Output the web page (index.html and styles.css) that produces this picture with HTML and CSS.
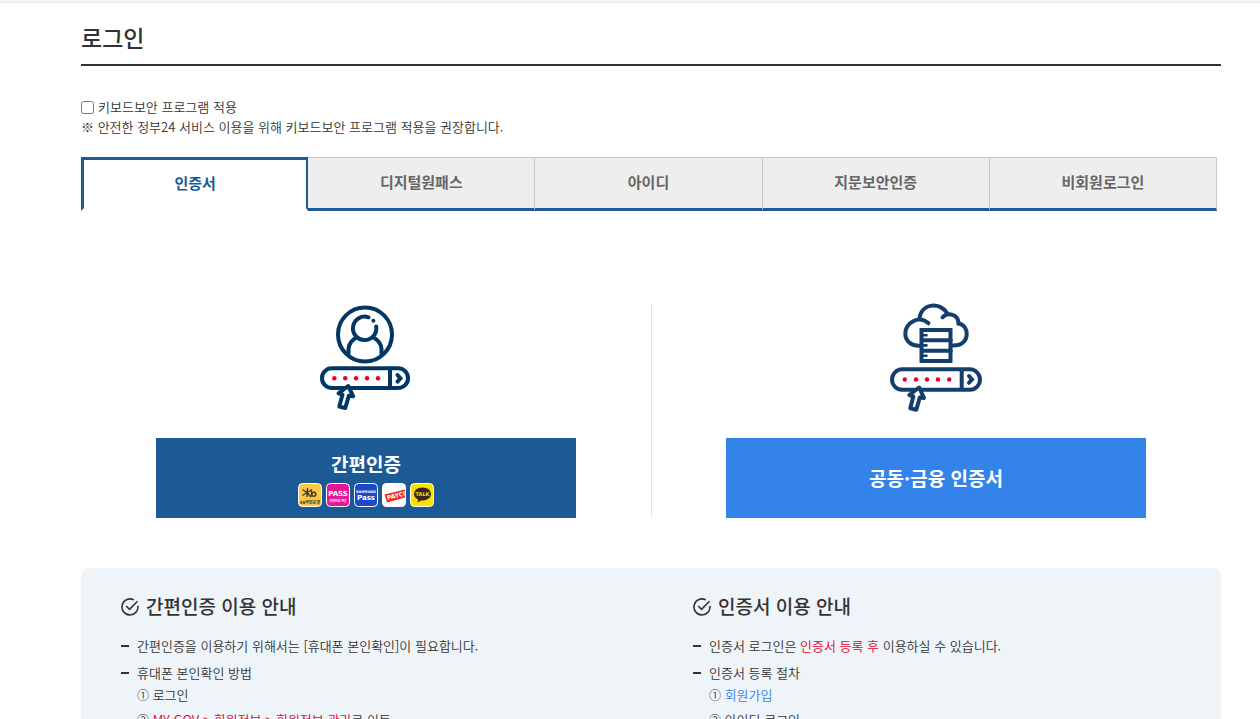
FILE: index.html
```html
<!DOCTYPE html>
<html lang="ko">
<head>
<meta charset="utf-8">
<meta name="viewport" content="width=device-width, initial-scale=1">
<title>로그인</title>
<link rel="stylesheet" href="styles.css">
</head>
<body>
<div class="topbar"></div>
<main class="page">
  <h1 class="title">로그인</h1>
  <div class="security">
    <div class="security-row"><input type="checkbox" id="keysec"><label for="keysec">키보드보안 프로그램 적용</label></div>
    <p>※ 안전한 정부24 서비스 이용을 위해 키보드보안 프로그램 적용을 권장합니다.</p>
  </div>
  <nav class="tabs">
    <button type="button" class="tab active">인증서</button>
    <button type="button" class="tab">디지털원패스</button>
    <button type="button" class="tab">아이디</button>
    <button type="button" class="tab">지문보안인증</button>
    <button type="button" class="tab">비회원로그인</button>
  </nav>

  <section class="methods">
    <div class="method">
      <svg class="picture" viewBox="318 302 96 112" fill="none" stroke="#003764" stroke-width="4" stroke-linecap="round" aria-hidden="true">
        <circle cx="365" cy="334.5" r="27"/>
        <path d="M368.500 317.300A11.700 11.700 0 1 0 376.200 326.500M348.500 354V349Q349 341.500 356.500 337.500M381.500 354V349Q381 341.500 373.500 337.500"/>
        <circle cx="373.400" cy="320.700" r="2" fill="#003764" stroke="none"/>
        <rect x="322" y="368.300" width="86" height="19.700" rx="9.850"/>
        <path d="M390 369V388" stroke-linecap="butt"/>
        <path d="M397.500 375L400.500 378.300L397.500 381.600" stroke-width="4"/>
        <g fill="#e4002b" stroke="none"><circle cx="334.300" cy="378.300" r="2.200"/><circle cx="345.200" cy="378.300" r="2.200"/><circle cx="356" cy="378.300" r="2.200"/><circle cx="367" cy="378.300" r="2.200"/><circle cx="378" cy="378.300" r="2.200"/></g>
        <path d="M348.200 386L353.200 396.300L348.800 395.700L345.300 408L339.300 406.600L342.500 394.600L338.500 393.400Z" fill="#fff" stroke-width="4" stroke-linejoin="round"/>
      </svg>
      <button type="button" class="action navy">
        <span>간편인증</span>
        <span class="brands">
          <svg viewBox="0 0 24 24" aria-hidden="true"><rect x=".5" y=".5" width="23" height="23" rx="4" fill="#fdc944" stroke="#fff"/><path d="M4.500 6.500L11.500 11.500M9.500 5L9 14M4.500 12.500L14 6.500M9 10L13 14M13.500 6.500V13.500" stroke="#44382d" stroke-width="1.400" fill="none"/><circle cx="15.800" cy="11.300" r="2" fill="none" stroke="#44382d" stroke-width="1.500"/><text x="12" y="20.500" font-size="4" font-weight="700" text-anchor="middle" fill="#44382d">KB국민은행</text></svg>
          <svg viewBox="0 0 24 24" aria-hidden="true"><rect x=".5" y=".5" width="23" height="23" rx="4" fill="#e4149b" stroke="#fff"/><text class="latin" x="12" y="13" font-size="7" text-anchor="middle" fill="#fff">PASS</text><text x="12" y="19" font-size="3" font-weight="700" text-anchor="middle" fill="#fff">휴대전화 인증</text></svg>
          <svg viewBox="0 0 24 24" aria-hidden="true"><rect x=".5" y=".5" width="23" height="23" rx="4" fill="#1b49cb" stroke="#fff"/><text class="latin" x="12" y="9.500" font-size="3.500" text-anchor="middle" fill="#fff">SAMSUNG</text><text class="latin" x="12" y="17" font-size="7" text-anchor="middle" fill="#fff">Pass</text></svg>
          <svg viewBox="0 0 24 24" aria-hidden="true"><rect width="24" height="24" rx="4.500" fill="#fff"/><path d="M2.500 11.500L23 6.500V14.500L5 19.500Z" fill="#f22624"/><text class="latin" x="5.500" y="17" font-size="6" fill="#fff" transform="rotate(-14 5.500 17)">PAYCO</text></svg>
          <svg viewBox="0 0 24 24" aria-hidden="true"><rect x=".5" y=".5" width="23" height="23" rx="4" fill="#fae100" stroke="#fff"/><path d="M12.500 4.500C7.600 4.500 4 7.300 4 11C4 13.400 5.500 15.500 8 16.600L7.500 19.500L11 17.400C17 18 21 14.800 21 11C21 7.300 17.400 4.500 12.500 4.500Z" fill="#3b2520"/><text class="latin" x="12.500" y="13" font-size="5" text-anchor="middle" fill="#fae100">TALK</text></svg>
        </span>
      </button>
    </div>
    <div class="method">
      <svg class="picture" viewBox="888 302 96 112" fill="none" stroke="#143e6b" stroke-width="4" stroke-linecap="round" aria-hidden="true">
        <path d="M920 345.700C911 346.500 905.300 340.500 905.300 333.500C905.300 323 918.500 314.500 928.500 323.300M919.300 318.500C922 302 941 302.500 947 313M942.500 317.300C948 311.500 958.500 314.500 958.500 323.500C964 324.500 966.700 329 966.700 334C966.700 341.500 961 346 952.300 345.500"/>
        <path d="M921.500 330H950.500V361H921.500ZM921.500 340.300H951M921.500 350.700H951"/>
        <path d="M922 335.200H926.500M922 345.400H926.500M922 355.700H926.500" stroke-width="2.600"/>
        <rect x="892" y="369.300" width="88" height="20.500" rx="10.250"/>
        <path d="M961.700 370V389" stroke-linecap="butt"/>
        <path d="M969 376L972 379.400L969 382.800" stroke-width="4"/>
        <g fill="#e4002b" stroke="none"><circle cx="904.800" cy="379.500" r="2.200"/><circle cx="916" cy="379.500" r="2.200"/><circle cx="927" cy="379.500" r="2.200"/><circle cx="938" cy="379.500" r="2.200"/><circle cx="949.200" cy="379.500" r="2.200"/></g>
        <path d="M919.200 387.500L924 398L919.800 397.400L916.300 409.700L910.200 408.300L913.400 396.300L909.300 395Z" fill="#fff" stroke-width="4" stroke-linejoin="round"/>
      </svg>
      <button type="button" class="action blue">공동·금융 인증서</button>
    </div>
  </section>

  <section class="guide">
    <div class="guide-col">
      <h2><svg viewBox="0 0 18 18" aria-hidden="true"><path d="M12.800 1.900A8 8 0 1 0 16.900 7.800M5.200 8L8.500 11.400L16.500 3.200"/></svg>간편인증 이용 안내</h2>
      <ul>
        <li>간편인증을 이용하기 위해서는 [휴대폰 본인확인]이 필요합니다.</li>
        <li>휴대폰 본인확인 방법
          <ol><li><span class="num">①</span> 로그인</li><li><span class="num">②</span> <em>MY GOV &gt; 회원정보 &gt; 회원정보 관리</em>로 이동</li></ol>
        </li>
      </ul>
    </div>
    <div class="guide-col">
      <h2><svg viewBox="0 0 18 18" aria-hidden="true"><path d="M12.800 1.900A8 8 0 1 0 16.900 7.800M5.200 8L8.500 11.400L16.500 3.200"/></svg>인증서 이용 안내</h2>
      <ul>
        <li>인증서 로그인은 <em>인증서 등록 후</em> 이용하실 수 있습니다.</li>
        <li>인증서 등록 절차
          <ol><li><span class="num">①</span> <a href="#">회원가입</a></li><li><span class="num">②</span> 아이디 로그인</li></ol>
        </li>
      </ul>
    </div>
  </section>
</main>
</body>
</html>
```
FILE: styles.css
```css
* { box-sizing: border-box; }
html { scrollbar-width: none; }
body {
  margin: 0;
  background: #fff;
  color: #333;
  font: 350 13px/20px "Noto Sans CJK KR", sans-serif;
}
h1, h2, p, ul, ol { margin: 0; padding: 0; }
ul, ol { list-style: none; }
button { font-family: inherit; cursor: pointer; }

.topbar { height: 3px; background: #f7f5f6; border-bottom: 1px solid #e9e7e8; }
.page { padding: 0 39px 0 81px; }
.title {
  padding: 18px 0 11px;
  border-bottom: 2px solid #333;
  font-size: 23px;
  line-height: 32px;
  font-weight: 500;
}
.security { padding: 31px 0 20px; }
.security-row { display: flex; align-items: center; gap: 4px; }
.security-row input { width: 13px; height: 13px; margin: 0; }

.tabs { display: grid; grid-template-columns: repeat(5, 1fr); margin-right: 4px; }
.tab {
  height: 54px;
  padding: 0 0 3px;
  border: 1px solid #c9c9c9;
  border-left-width: 0;
  border-bottom: 3px solid #1b5a94;
  background: #eee;
  color: #666;
  font-size: 15px;
  font-weight: 700;
}
.tab.active {
  border: 3px solid #1b5a94;
  border-right-width: 2px;
  border-bottom-color: #fff;
  background: #fff;
  color: #1b5a94;
}

.methods {
  display: grid;
  grid-template-columns: 1fr 1fr;
  padding: 91px 0 50px;
  background: linear-gradient(#e5e5e5, #e5e5e5) center 93px / 1px calc(100% - 143px) no-repeat;
}
.method { display: flex; flex-direction: column; align-items: center; gap: 24px; padding: 0 75px; }
.picture { width: 96px; height: 112px; }
.action {
  display: flex;
  flex-direction: column;
  align-items: center;
  justify-content: center;
  gap: 5px;
  width: 100%;
  height: 80px;
  padding: 0;
  border: 0;
  color: #fff;
  font-size: 19px;
  line-height: 28px;
  font-weight: 700;
}
.navy { background: #1b5a94; }
.blue { background: #3383eb; }
.brands { display: flex; gap: 4px; }
.brands svg { width: 24px; height: 24px; }
.latin { font-family: "DejaVu Sans", sans-serif; font-weight: 700; }

.guide {
  display: grid;
  grid-template-columns: 1fr 1fr;
  gap: 84px;
  padding: 24px 40px 40px;
  border-radius: 8px;
  background: #eff4f9;
}
.guide h2 {
  display: flex;
  align-items: center;
  gap: 7px;
  margin-bottom: 16px;
  font-size: 19px;
  line-height: 28px;
  font-weight: 500;
}
.guide h2 svg { width: 18px; height: 18px; margin-top: 2px; fill: none; stroke: #333; stroke-width: 1.6; }
.guide-col { white-space: nowrap; }
.guide ul > li {
  padding-left: 16px;
  margin-bottom: 7px;
  background: linear-gradient(#333, #333) 0 9px / 8px 2px no-repeat;
}
.guide ol { padding-top: 1px; }
.guide ul ol li { padding: 0; margin: 0 0 3px; background: none; line-height: 22px; }
.num { font-size: 12px; }
.guide em { font-style: normal; color: #e4002b; }
.guide a { color: #3383eb; text-decoration: none; }
```
